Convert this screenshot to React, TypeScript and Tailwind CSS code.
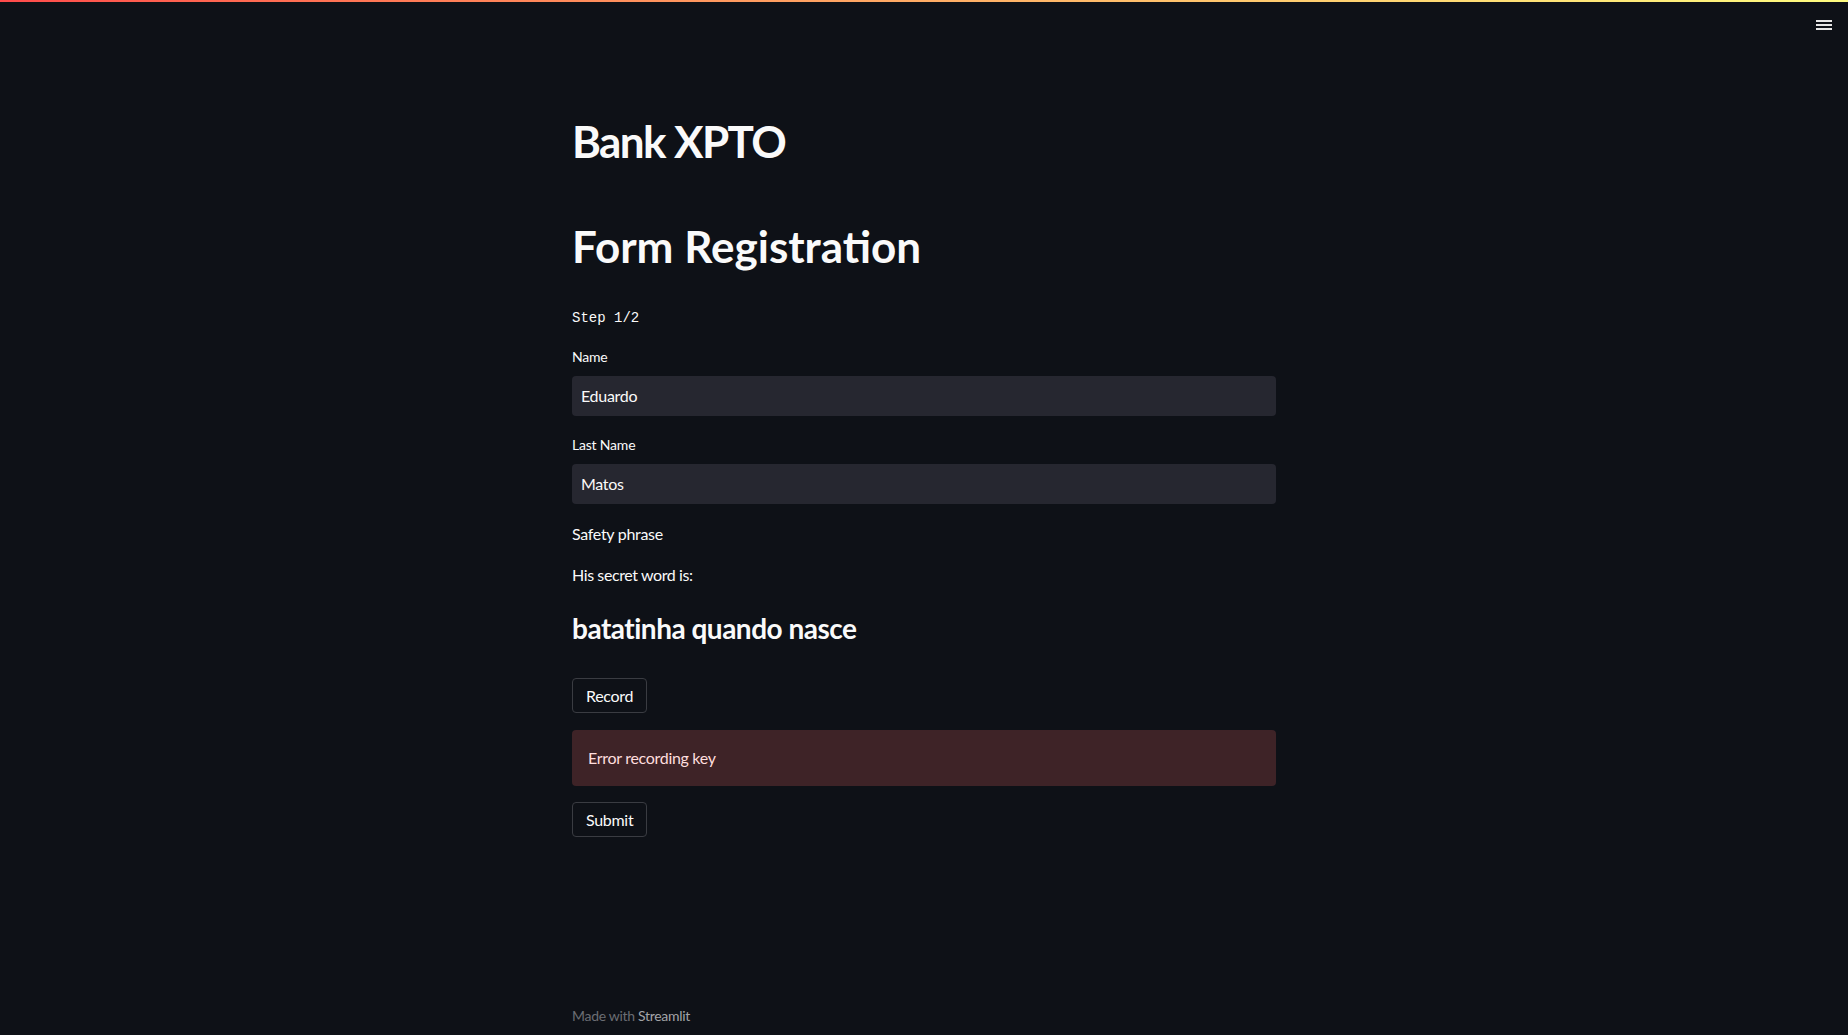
import React from "react";

const font = { fontFamily: "Lato, 'Noto Sans', sans-serif" };

const Label = ({ text }: { text: string }) => (
  <div className="h-[20px] text-[14px] leading-[20px] tracking-[-0.2px] text-[#fafafa]">{text}</div>
);

const TextInput = ({ value }: { value: string }) => (
  <div className="flex h-[40px] items-center rounded-[4px] bg-[#262730] px-[9px] text-[16px] tracking-[-0.3px] text-[#fafafa]">
    {value}
  </div>
);

const Button = ({ text }: { text: string }) => (
  <div className="flex h-[35px] w-fit items-center rounded-[4px] border border-[#3a3c42] bg-[#0e1117] px-[13px] text-[16px] tracking-[-0.3px] text-[#fafafa]">
    {text}
  </div>
);

const App = () => {
  return (
    <div className="relative flex min-h-[1035px] flex-col bg-[#0e1117]" style={font}>
      <div className="absolute left-0 right-0 top-0 h-[2px] bg-gradient-to-r from-[#ff4b4b] to-[#fffd80]" />
      <div className="absolute right-[16px] top-[20px] flex w-[16px] flex-col gap-[2.5px]">
        <div className="h-[1.5px] bg-[#e6e6e6]" />
        <div className="h-[1.5px] bg-[#e6e6e6]" />
        <div className="h-[1.5px] bg-[#e6e6e6]" />
      </div>

      <div className="mx-auto flex w-[704px] flex-1 flex-col pt-[115px]">
        <h1 className="h-[52px] text-[44px] font-bold leading-[52px] tracking-[-1.6px] text-[#fafafa]">
          Bank XPTO
        </h1>
        <h1 className="mt-[53px] h-[52px] text-[44px] font-bold leading-[52px] text-[#fafafa]">
          Form Registration
        </h1>
        <div
          className="mt-[36px] h-[20px] text-[14px] leading-[20px] text-[#fafafa]"
          style={{ fontFamily: "'Liberation Mono', monospace" }}
        >
          Step 1/2
        </div>

        <div className="mt-[19px]">
          <Label text="Name" />
        </div>
        <div className="mt-[9px]">
          <TextInput value="Eduardo" />
        </div>
        <div className="mt-[19px]">
          <Label text="Last Name" />
        </div>
        <div className="mt-[9px]">
          <TextInput value="Matos" />
        </div>

        <p className="mt-[18px] h-[24px] text-[16px] leading-[24px] tracking-[-0.3px] text-[#fafafa]">
          Safety phrase
        </p>
        <p className="mt-[17px] h-[24px] text-[16px] leading-[24px] tracking-[-0.4px] text-[#fafafa]">
          His secret word is:
        </p>
        <h3 className="mt-[23px] h-[36px] text-[28px] font-bold leading-[36px] tracking-[-0.5px] text-[#fafafa]">
          batatinha quando nasce
        </h3>

        <div className="mt-[32px]">
          <Button text="Record" />
        </div>
        <div className="mt-[17px] flex h-[56px] items-center rounded-[4px] bg-[#3e2327] px-[16px] text-[16px] tracking-[-0.3px] text-[#ffdede]">
          Error recording key
        </div>
        <div className="mt-[16px]">
          <Button text="Submit" />
        </div>

        <div className="mt-auto pb-[9px] text-[14px] leading-[20px] tracking-[-0.3px] text-[#6b6d73]">
          Made with <span className="text-[#a3a4a8]">Streamlit</span>
        </div>
      </div>
    </div>
  );
};

export default App;
